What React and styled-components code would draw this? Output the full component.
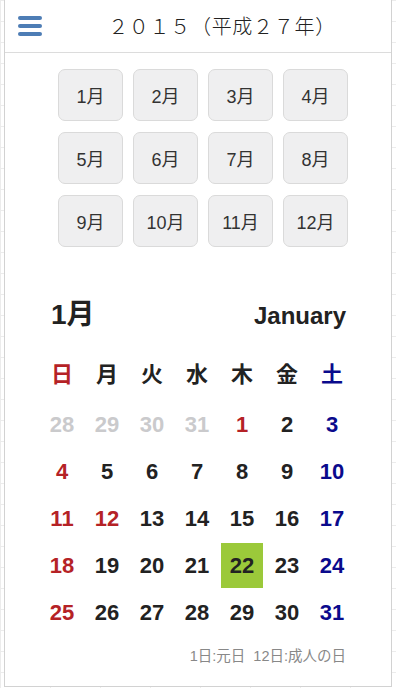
import React from "react";
import styled, { createGlobalStyle } from "styled-components";

const Global = createGlobalStyle`
  html, body { margin: 0; padding: 0; }
  body {
    background-color: #fff;
    background-image:
      linear-gradient(to bottom, #ececec 1px, transparent 1px),
      linear-gradient(to right, #ececec 1px, transparent 1px);
    background-size: 100% 21px, 50px 100%;
    font-family: "Liberation Sans", "Noto Sans CJK JP", sans-serif;
    color: #222;
  }
`;

const Card = styled.div`
  box-sizing: border-box;
  margin: 0 4px;
  height: 687px;
  background: #fff;
  border: 1px solid #d2d2d2;
  border-top: none;
  display: flex;
  flex-direction: column;
`;

const Header = styled.header`
  box-sizing: border-box;
  height: 53px;
  border-bottom: 1px solid #dcdcdc;
  display: grid;
  grid-template-columns: 64px 1fr 16px;
  align-items: center;
`;

const Burger = styled.div`
  padding-left: 13px;
  display: flex;
  flex-direction: column;
  gap: 4px;
  margin-top: -1px;
`;

const Bar = styled.span`
  display: block;
  width: 24px;
  height: 4px;
  border-radius: 2px;
  background: #4d7db5;
`;

const Title = styled.h1`
  margin: 0;
  text-align: center;
  font-family: "Noto Sans CJK JP", sans-serif;
  font-weight: 300;
  font-size: 20px;
  letter-spacing: 0.7px;
  color: #222;
  line-height: 1;
  margin-top: -1px;
`;

const MonthGrid = styled.div`
  display: grid;
  grid-template-columns: repeat(4, 65px);
  grid-auto-rows: 52px;
  column-gap: 10px;
  row-gap: 11px;
  padding: 16px 0 0 53px;
`;

const MonthButton = styled.button`
  box-sizing: border-box;
  margin: 0;
  padding: 0;
  border: 1px solid #dadada;
  border-radius: 7px;
  background: #efeff0;
  font-family: "Liberation Sans", "Noto Sans CJK JP", sans-serif;
  font-size: 18px;
  color: #333;
`;

const Calendar = styled.section`
  padding: 0 0 0 36px;
  margin-top: 50px;
`;

const CalHead = styled.div`
  display: flex;
  justify-content: space-between;
  align-items: baseline;
  width: 295px;
  padding: 0 8px 0 10px;
  height: 36px;
`;

const MonthJa = styled.div`
  font-size: 28px;
  font-weight: bold;
  line-height: 36px;
`;

const MonthEn = styled.div`
  font-size: 24px;
  font-weight: bold;
  line-height: 36px;
`;

const Grid = styled.div`
  display: grid;
  grid-template-columns: repeat(7, 42px);
  column-gap: 3px;
  grid-auto-rows: 45px;
  row-gap: 2px;
`;

const WeekGrid = styled(Grid)`
  margin-top: 16px;
  margin-bottom: 8px;
`;

const colors = {
  sun: "#b52226",
  sat: "#0a0a8c",
  other: "#cacacc",
  normal: "#222",
};

const Week = styled.div`
  display: flex;
  align-items: center;
  justify-content: center;
  font-family: "Noto Sans CJK JP", sans-serif;
  font-weight: bold;
  font-size: 22px;
  color: ${(p) => colors[p.$kind]};
`;

const Day = styled.div`
  display: flex;
  align-items: center;
  justify-content: center;
  font-weight: bold;
  font-size: 22px;
  color: ${(p) => colors[p.$kind]};
  background: ${(p) => (p.$today ? "#9bc93a" : "transparent")};
`;

const Note = styled.p`
  margin: 9px 0 0;
  width: 305px;
  text-align: right;
  font-size: 14.5px;
  color: #888;
  font-family: "Liberation Sans", "Noto Sans CJK JP", sans-serif;
  white-space: pre;
`;

const months = Array.from({ length: 12 }, (_, i) => `${i + 1}月`);
const weekdays = ["日", "月", "火", "水", "木", "金", "土"];

const days = [
  ...[28, 29, 30, 31].map((d) => ({ d, kind: "other" })),
];
for (let d = 1; d <= 31; d++) {
  const col = (d + 3) % 7;
  let kind = "normal";
  if (col === 0 || d === 1 || d === 12) kind = "sun";
  else if (col === 6) kind = "sat";
  days.push({ d, kind, today: d === 22 });
}

export default function App() {
  return (
    <>
      <Global />
      <Card>
        <Header>
          <Burger>
            <Bar />
            <Bar />
            <Bar />
          </Burger>
          <Title>２０１５（平成２７年）</Title>
          <span />
        </Header>
        <MonthGrid>
          {months.map((m) => (
            <MonthButton key={m}>{m}</MonthButton>
          ))}
        </MonthGrid>
        <Calendar>
          <CalHead>
            <MonthJa>1月</MonthJa>
            <MonthEn>January</MonthEn>
          </CalHead>
          <WeekGrid>
            {weekdays.map((w, i) => (
              <Week key={w} $kind={i === 0 ? "sun" : i === 6 ? "sat" : "normal"}>
                {w}
              </Week>
            ))}
          </WeekGrid>
          <Grid>
            {days.map((x, i) => (
              <Day key={i} $kind={x.kind} $today={x.today}>
                {x.d}
              </Day>
            ))}
          </Grid>
          <Note>{"1日:元日  12日:成人の日"}</Note>
        </Calendar>
      </Card>
    </>
  );
}
